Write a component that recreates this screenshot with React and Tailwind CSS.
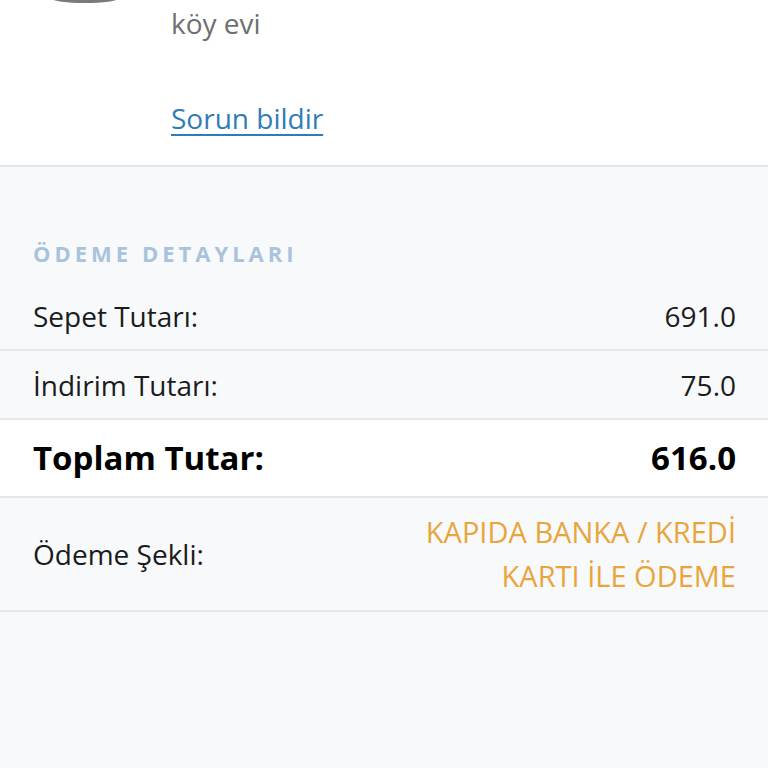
export default function App() {
  const font = { fontFamily: '"Open Sans", "Noto Sans", sans-serif' };
  return (
    <div className="w-[768px] h-[768px] bg-[#f8f9fb] overflow-hidden" style={font}>
      <div className="bg-white border-b-2 border-[#e6e7ea] h-[167px] relative">
        <div className="absolute left-[52px] -top-[6px] w-[66px] h-[9px] rounded-b-[50%] border-b-[3px] border-[#5a5a5a] opacity-80" />
        <div className="pl-[171px] pt-[1px]">
          <div className="text-[28px] leading-[44px] text-[#6f6f6f]">köy evi</div>
          <div className="mt-[51px] text-[28px] leading-[44px] text-[#2f7db8] underline underline-offset-[5px] decoration-[2px]">Sorun bildir</div>
        </div>
      </div>
      <div className="px-[33px] pt-[71px] pb-[15px]">
        <div className="text-[22px] font-bold tracking-[4px] text-[#a9c3dc] leading-[30px]">ÖDEME DETAYLARI</div>
      </div>
      <div className="flex items-center justify-between px-[33px] pr-[32px] h-[68px] border-b-2 border-[#e6e7ea] text-[28px] text-[#1b1b1b]">
        <span>Sepet Tutarı:</span>
        <span>691.0</span>
      </div>
      <div className="flex items-center justify-between px-[33px] pr-[32px] h-[69px] border-b-2 border-[#e6e7ea] text-[28px] text-[#1b1b1b]">
        <span>İndirim Tutarı:</span>
        <span>75.0</span>
      </div>
      <div className="flex items-center justify-between px-[33px] pr-[32px] h-[78px] bg-white border-b-2 border-[#e6e7ea] text-[33px] font-bold text-black">
        <span>Toplam Tutar:</span>
        <span>616.0</span>
      </div>
      <div className="flex items-center justify-between px-[33px] pr-[32px] h-[114px] border-b-2 border-[#e6e7ea] text-[28px]">
        <span className="text-[#1b1b1b]">Ödeme Şekli:</span>
        <span className="text-right text-[29px] leading-[44px] text-[#e9a53b]">KAPIDA BANKA / KREDİ<br />KARTI İLE ÖDEME</span>
      </div>
    </div>
  );
}
